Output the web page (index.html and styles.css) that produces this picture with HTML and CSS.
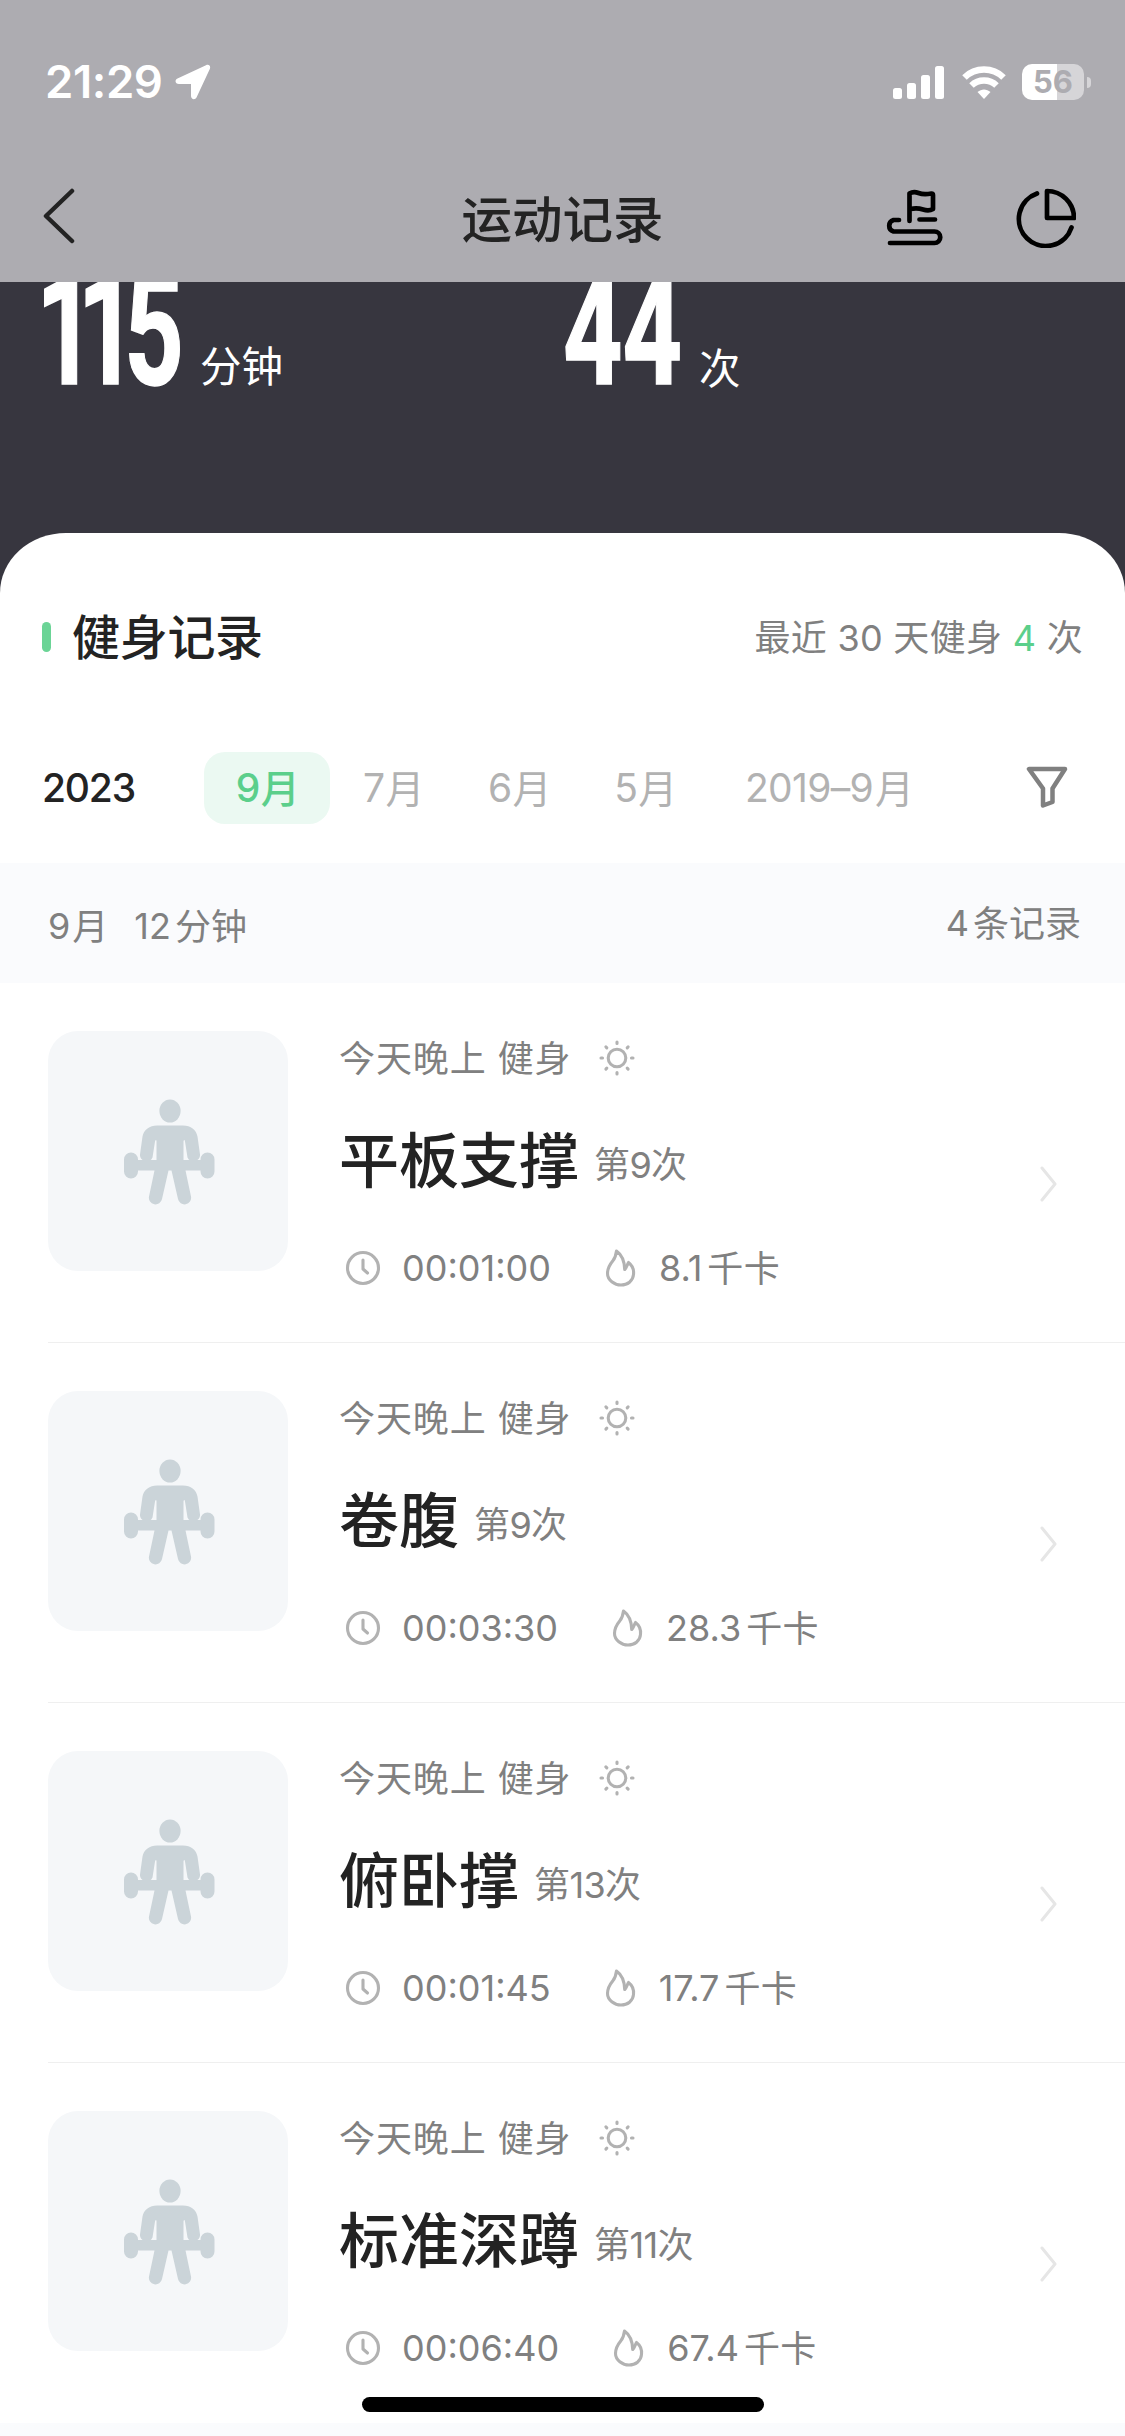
FILE: index.html
```html
<!DOCTYPE html>
<html lang="zh-CN">
<head>
<meta charset="utf-8">
<title>运动记录</title>
<link rel="stylesheet" href="styles.css">
</head>
<body>
<svg class="defs" aria-hidden="true">
  <symbol id="figure" viewBox="0 0 92 106">
    <ellipse cx="46" cy="12" rx="10.6" ry="11.5"/>
    <path d="M33 26.500h26c8 0 13 4 14.500 11l2.500 18a6.500 6.500 0 0 1-12.500 3l-2.500-16q-.5-2.500-1.500-.5V61h17v-.5a7 7 0 0 1 14 0v12a7 7 0 0 1-14 0V71.500H61.500l5.500 26a6.600 6.600 0 0 1-13 2.500l-6.500-28.500h-3L38 100a6.600 6.600 0 0 1-13-2.500l5.500-26H14v1a7 7 0 0 1-14 0v-12a7 7 0 0 1 14 0v.5h18.500V42q-.5-2-1.500.5l-2.500 16a6.500 6.500 0 0 1-12.500-3l2.500-18C20 30.500 25.500 26.500 33 26.500z"/>
  </symbol>
  <symbol id="sun" viewBox="0 0 36 36">
    <circle cx="18" cy="18" r="8.800"/>
    <path d="M18 2v1.500M18 32.500v1.500M2 18h1.500M32.500 18h1.500M6.900 6.900l.9.900M28.200 28.200l.9.900M6.900 29.100l.9-.9M28.200 7.800l.9-.9"/>
  </symbol>
  <symbol id="clock" viewBox="0 0 36 36">
    <circle cx="18" cy="18" r="15.500"/>
    <path d="M18 10v9l4.500 4"/>
  </symbol>
  <symbol id="flame" viewBox="0 0 32 38">
    <path d="M11.500 2c6.500 4.500 8 11 8.200 18.500 2-1.800 2.300-4.700 3.800-7 4 3 5.500 7.500 5 12C28 32 22.500 36 16 36S2.500 31 2.500 24.500 5.500 14.500 8 11.500 11 6 11.500 2z"/>
  </symbol>
  <symbol id="arrow" viewBox="0 0 18 36"><path d="M2 2l13 16L2 34"/></symbol>
</svg>

<header class="header">
  <div class="status">
    <span class="time">21:29</span>
    <svg class="location" viewBox="0 0 36 36"><path d="M31 1.200C34 0 36 2 34.800 5L21.500 33.500c-1.500 2.800-5.500 2-5.500-1.500V20H4C.3 20-.8 16 2.500 14.500z"/></svg>
    <div class="status-right">
      <svg class="signal" viewBox="0 0 51 33"><rect y="22" width="9" height="11" rx="2.500"/><rect x="14" y="17" width="9" height="16" rx="2.500"/><rect x="28" y="9" width="9" height="24" rx="2.500"/><rect x="42" width="9" height="33" rx="2.500"/></svg>
      <svg class="wifi" viewBox="0 0 46 34"><path d="M23 34l-6.500-7c4-3.500 9-3.500 13 0z"/><path class="wave" d="M10.500 20.500a18 18 0 0 1 25 0M3.500 12.500a28 28 0 0 1 39 0"/></svg>
      <span class="battery">56</span><span class="nub"></span>
    </div>
  </div>
  <nav class="nav">
    <svg class="back" viewBox="0 0 32 56"><path d="M29 3L3 28l26 25"/></svg>
    <h1 class="title">运动记录</h1>
    <div class="actions">
      <svg class="route" viewBox="0 0 58 58"><path d="M24.500 32V4.500q4-2.500 9-.5t13 .5c1 0 1.500.5 1.500 1.500v14q-4 2.500-10 .5t-12.500-.5M34.500 30.500h15.500M14 31h-5.500a6 6 0 0 0 0 11.500h41a5.500 5.500 0 0 1 0 11.500H5"/></svg>
      <svg class="pie" viewBox="0 0 60 60"><path d="M31 3v27h27A27 27 0 0 0 31 3zM21 5.500a27 27 0 1 0 34.500 34"/></svg>
    </div>
  </nav>
</header>

<section class="summary">
  <div class="metric"><span class="figure minutes"><span class="one">11</span>5</span><span class="unit">分钟</span></div>
  <div class="metric"><span class="figure times">44</span><span class="unit low">次</span></div>
</section>

<main class="sheet">
  <div class="sheet-head">
    <h2 class="heading">健身记录</h2>
    <p class="recent">最近 30 天健身 <em>4</em> 次</p>
  </div>
  <div class="months">
    <span class="year">2023</span>
    <span class="month active">9<i>月</i></span>
    <span class="month">7<i>月</i></span>
    <span class="month">6<i>月</i></span>
    <span class="month">5<i>月</i></span>
    <span class="older">2019–9<i>月</i></span>
    <svg class="filter" viewBox="0 0 42 42"><path d="M3 3h36L26.500 22.500V36l-9.500 3.500v-17z"/></svg>
  </div>
  <div class="band">
    <span>9<i>月</i></span><span class="total">12<i>分钟</i></span><span class="count">4<i>条记录</i></span>
  </div>

  <article class="row">
    <div class="thumb"><svg><use href="#figure"/></svg></div>
    <div class="info">
      <div class="meta">今天晚上 健身<svg class="line-icon sun"><use href="#sun"/></svg></div>
      <div class="name"><h3>平板支撑</h3><span>第9次</span></div>
      <div class="stats"><svg class="line-icon clock"><use href="#clock"/></svg><span class="duration">00:01:00</span><svg class="line-icon flame"><use href="#flame"/></svg><span>8.1<i>千卡</i></span></div>
    </div>
    <svg class="go"><use href="#arrow"/></svg>
  </article>
  <article class="row">
    <div class="thumb"><svg><use href="#figure"/></svg></div>
    <div class="info">
      <div class="meta">今天晚上 健身<svg class="line-icon sun"><use href="#sun"/></svg></div>
      <div class="name"><h3>卷腹</h3><span>第9次</span></div>
      <div class="stats"><svg class="line-icon clock"><use href="#clock"/></svg><span class="duration">00:03:30</span><svg class="line-icon flame"><use href="#flame"/></svg><span>28.3<i>千卡</i></span></div>
    </div>
    <svg class="go"><use href="#arrow"/></svg>
  </article>
  <article class="row">
    <div class="thumb"><svg><use href="#figure"/></svg></div>
    <div class="info">
      <div class="meta">今天晚上 健身<svg class="line-icon sun"><use href="#sun"/></svg></div>
      <div class="name"><h3>俯卧撑</h3><span>第13次</span></div>
      <div class="stats"><svg class="line-icon clock"><use href="#clock"/></svg><span class="duration">00:01:45</span><svg class="line-icon flame"><use href="#flame"/></svg><span>17.7<i>千卡</i></span></div>
    </div>
    <svg class="go"><use href="#arrow"/></svg>
  </article>
  <article class="row">
    <div class="thumb"><svg><use href="#figure"/></svg></div>
    <div class="info">
      <div class="meta">今天晚上 健身<svg class="line-icon sun"><use href="#sun"/></svg></div>
      <div class="name"><h3>标准深蹲</h3><span>第11次</span></div>
      <div class="stats"><svg class="line-icon clock"><use href="#clock"/></svg><span class="duration">00:06:40</span><svg class="line-icon flame"><use href="#flame"/></svg><span>67.4<i>千卡</i></span></div>
    </div>
    <svg class="go"><use href="#arrow"/></svg>
  </article>
  <div class="tail"></div>
</main>
<div class="home-bar"></div>
</body>
</html>
```
FILE: styles.css
```css
* { box-sizing: border-box; }
body {
  margin: 0;
  width: 1125px;
  height: 2436px;
  overflow: hidden;
  background: #37363f;
  color: #808080;
  font-family: "Inter", "Noto Sans CJK SC", sans-serif;
  font-size: 36px;
  line-height: 54px;
}
h1, h2, h3, p { margin: 0; }
i, em { font-style: normal; }
svg { display: block; flex: none; fill: none; }
.defs { width: 0; height: 0; position: absolute; }

.header { height: 282px; background: #adacb1; }
.status { height: 132px; padding: 32px 34px 0 45px; display: flex; align-items: center; color: #fff; }
.time { font-size: 45.500px; font-weight: 600; letter-spacing: -.4px; }
.location { width: 36px; height: 36px; margin-left: 12px; fill: #fff; }
.status-right { margin-left: auto; display: flex; align-items: center; }
.signal { width: 51px; height: 33px; fill: #fff; }
.wifi { width: 46px; height: 34px; margin: 0 15.500px 0 17px; fill: #fff; }
.wave { fill: none; stroke: #fff; stroke-width: 6.500; }
.battery {
  width: 62px; height: 36px; border-radius: 10px;
  background: linear-gradient(90deg, #fff 56%, #d6d5d8 56%);
  color: #adacb1; font-size: 31px; font-weight: 700; line-height: 36px; text-align: center;
}
.nub { width: 4px; height: 11px; margin-left: 3px; border-radius: 0 6px 6px 0; background: #d6d5d8; }

.nav { height: 150px; display: grid; grid-template-columns: 1fr auto 1fr; align-items: center; padding: 22px 49px 0 43px; }
.back { width: 32px; height: 56px; margin-top: -4px; stroke: #232323; stroke-width: 4.500; stroke-linecap: round; stroke-linejoin: round; }
.title { margin: 3px 0 0 6px; font-size: 50.500px; font-weight: 500; color: #232323; }
.actions { display: flex; justify-content: flex-end; align-items: center; gap: 73px; stroke: #000; stroke-width: 4.700; stroke-linecap: round; stroke-linejoin: round; }
.route { width: 58px; height: 58px; }
.pie { width: 60px; height: 60px; }

.summary { height: 251px; padding-left: 43px; display: flex; overflow: hidden; color: #fff; }
.metric { width: 520px; display: flex; align-items: flex-start; }
.figure {
  height: 155px; margin-top: -28px; line-height: 155px; white-space: nowrap;
  font-family: Roboto, sans-serif; font-size: 155px; font-weight: 700;
  -webkit-text-stroke: 1.500px #fff;
  transform: scaleX(.67); transform-origin: 0 50%;
}
.one { margin-right: 8px; letter-spacing: -27px; }
.minutes { width: 164px; margin-left: -7px; }
.times { width: 136px; }
.unit { margin-top: 58px; font-size: 41.500px; }
.low { margin-top: 60px; }

.sheet { height: 1903px; border-radius: 66px 66px 0 0 / 60px 60px 0 0; background: #fff; overflow: hidden; }
.sheet-head { height: 207px; padding: 3px 42px 0; display: flex; justify-content: space-between; align-items: center; }
.heading { display: flex; align-items: center; gap: 21px; color: #232323; font-size: 48px; font-weight: 500; letter-spacing: -.3px; }
.heading::before { content: ""; width: 9px; height: 30px; margin-top: -2px; border-radius: 5px; background: #6bd496; }
.recent { letter-spacing: .3px; }
.recent em { color: #5bcf8b; }

.months { height: 123px; padding: 12px 57px 0 42px; display: flex; align-items: flex-start; font-size: 39px; line-height: 72px; color: #b2b2b2; }
.months i, .band i { margin-left: 2px; vertical-align: -1px; }
.year { width: 162px; color: #232323; font-weight: 500; letter-spacing: -1.200px; }
.month { width: 126px; height: 72px; text-align: center; border-radius: 21px; letter-spacing: -1.500px; }
.active { background: #ebf9f2; color: #5bcf8b; font-weight: 500; }
.older { margin-left: 37px; letter-spacing: -.7px; }
.filter { width: 42px; height: 42px; margin: 14px 0 0 auto; stroke: #808080; stroke-width: 4.500; stroke-linejoin: round; }

.band { height: 120px; padding: 6px 44px 0 48px; display: flex; align-items: center; background: #fafbfd; }
.total { margin-left: 26px; }
.band .total i, .band .count i { margin-left: 4px; }
.count { margin: -5px 0 0 auto; }

.row { height: 360px; margin-left: 48px; padding: 48px 67px 0 0; display: flex; border-bottom: 1px solid #efefef; }
.thumb { width: 240px; height: 240px; flex: none; border-radius: 30px; background: #f5f7f9; padding: 68px 0 0 76px; }
.thumb svg { width: 92px; height: 106px; fill: #cbd4d9; }
.info { margin-left: 51px; flex: 1; }
.meta { height: 54px; padding-top: 2px; display: flex; align-items: center; letter-spacing: .9px; }
.line-icon { width: 36px; height: 36px; stroke: #b2b2b2; stroke-width: 3.100; stroke-linecap: round; stroke-linejoin: round; }
.sun { margin: -2px 0 0 28px; }
.name { height: 84px; margin-top: 34px; display: flex; align-items: center; }
.name h3 { color: #232323; font-size: 60px; line-height: 84px; font-weight: 500; }
.name span { margin: 8px 0 0 15px; letter-spacing: -.6px; }
.stats { height: 54px; margin-top: 38px; display: flex; align-items: center; }
.stats i { margin-left: 5px; letter-spacing: .3px; vertical-align: -1px; }
.clock { margin: 0 21px 0 6px; }
.flame { width: 32px; height: 38px; margin: 0 22px 0 54px; }
.go { width: 18px; height: 36px; margin-top: 135px; stroke: #e6e6e6; stroke-width: 3; stroke-linecap: round; stroke-linejoin: round; }
.row:nth-last-child(2) { border-bottom: 0; }
.tail { height: 13px; background: #fafbfd; }
.home-bar { position: absolute; left: 362px; top: 2397px; width: 402px; height: 15px; border-radius: 8px; background: #000; }
```
